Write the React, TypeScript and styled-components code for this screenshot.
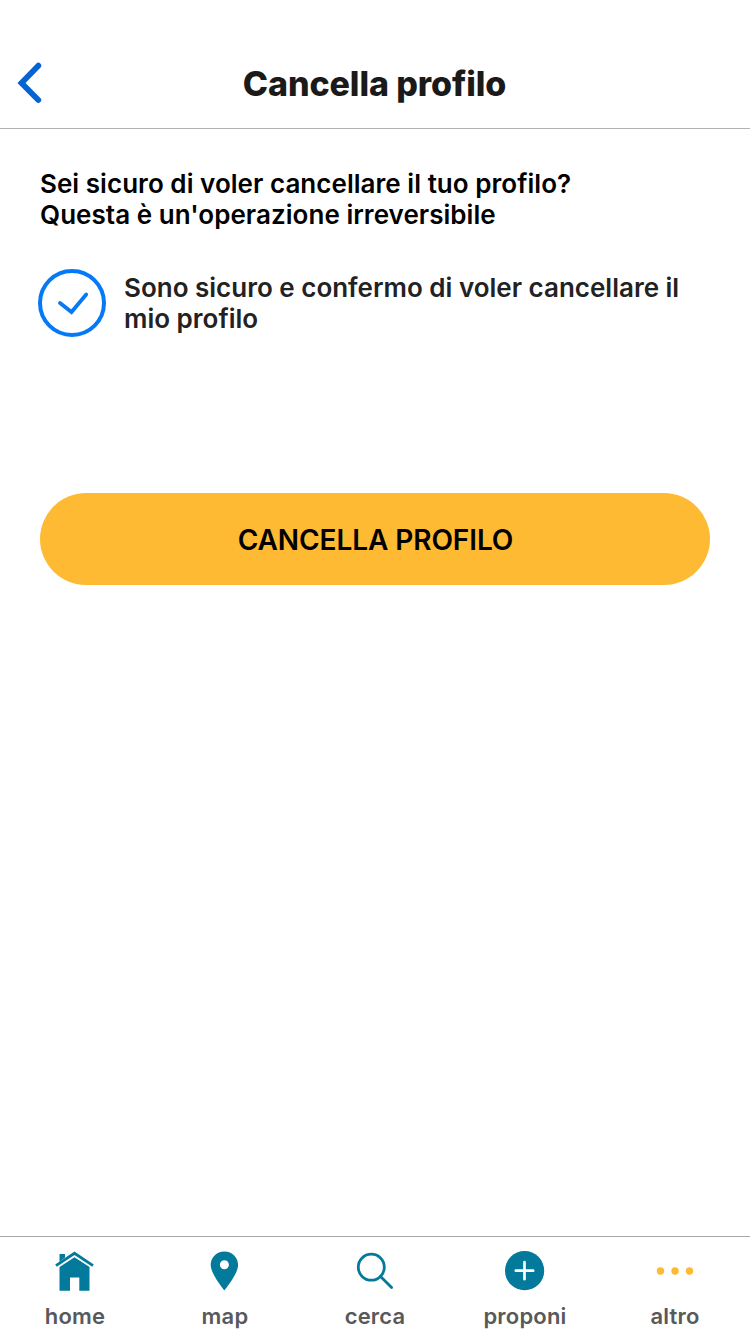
import React from 'react';
import styled, { createGlobalStyle } from 'styled-components';

const Global = createGlobalStyle`
  * { box-sizing: border-box; }
  body { margin: 0; background: #fff; font-family: Inter, "Liberation Sans", sans-serif; }
`;
const Screen = styled.div`
  height: 1334px;
  display: flex;
  flex-direction: column;
  overflow: hidden;
`;
const Header = styled.header`
  height: 129px;
  padding: 38px 17px 0;
  display: grid;
  grid-template-columns: 60px 1fr 60px;
  align-items: center;
  border-bottom: 1px solid #b2b2b2;
`;
const BackButton = styled.button`
  border: 0;
  padding: 0;
  background: none;
  display: flex;
`;
const Title = styled.h1`
  margin: 0;
  padding: 2px 1px 0 0;
  text-align: center;
  white-space: nowrap;
  font-size: 34px;
  line-height: 40px;
  font-weight: 800;
  color: #1a1a1a;
  letter-spacing: -0.1px;
`;
const Content = styled.main`
  flex: 1;
  padding: 39px 40px 0;
`;
const Paragraph = styled.p<{ $color?: string; $spacing?: number }>`
  margin: 0;
  font-size: 26px;
  line-height: 31px;
  font-weight: 600;
  letter-spacing: ${(p) => p.$spacing ?? 0}px;
  white-space: nowrap;
  color: ${(p) => p.$color ?? '#000'};
`;
const ConfirmRow = styled.label`
  margin: 38px 0 0 -2px;
  display: flex;
  align-items: center;
  gap: 18px;
`;
const ActionButton = styled.button`
  margin-top: 155px;
  padding: 1px 0 0 1px;
  width: 100%;
  height: 92px;
  border: 0;
  border-radius: 46px;
  background: #ffba33;
  font: 600 28px/34px Inter, sans-serif;
  letter-spacing: -0.08px;
  color: #000;
`;
const TabBar = styled.nav`
  height: 98px;
  border-top: 1px solid #a7a7a7;
  display: grid;
  grid-template-columns: repeat(5, 1fr);
`;
const Tab = styled.a`
  display: flex;
  flex-direction: column;
  align-items: center;
  padding-top: 12px;
  color: #58595a;
  font-size: 22px;
  line-height: 28px;
  font-weight: 600;
  letter-spacing: 0.2px;
`;
const TabIcon = styled.svg`
  width: 44px;
  height: 44px;
  margin-bottom: 9px;
  flex: none;
`;

const teal = '#037a9b';

export default function App() {
  return (
    <Screen>
      <Global />
      <Header>
        <BackButton aria-label="Indietro">
          <svg width="26" height="42" viewBox="0 0 26 42" fill="none" stroke="#0564d2" strokeWidth="5.800">
            <path d="M21.300 3.700 4.500 21 21.300 38" strokeLinecap="round" />
          </svg>
        </BackButton>
        <Title>Cancella profilo</Title>
      </Header>
      <Content>
        <Paragraph $spacing={0.04}>Sei sicuro di voler cancellare il tuo profilo?<br />Questa è un'operazione irreversibile</Paragraph>
        <ConfirmRow>
          <svg width="68" height="70" viewBox="0 0 68 70" fill="none" stroke="#067af6">
            <circle cx="34" cy="35" r="32" strokeWidth="4" />
            <path d="M22 35 33.500 44 48.200 26.500" strokeWidth="3.800" strokeLinecap="round" />
          </svg>
          <Paragraph $color="#222">Sono sicuro e confermo di voler cancellare il<br />mio profilo</Paragraph>
        </ConfirmRow>
        <ActionButton>CANCELLA PROFILO</ActionButton>
      </Content>
      <TabBar>
        <Tab>
          <TabIcon viewBox="0 0 44 44" fill={teal}>
            <path d="M6.500 5H12V8.500L6.500 13z" />
            <path d="M3 16.600 21.500 4.300 40 16.600" fill="none" stroke={teal} strokeWidth="2.800" />
            <path d="M6.500 18 21.500 8.200 36.500 18V41.700H26.300V28.500H17V41.700H6.500z" />
          </TabIcon>
          home
        </Tab>
        <Tab>
          <TabIcon viewBox="0 0 44 44" fill={teal}>
            <path fillRule="evenodd" d="M21.400 2.400C13.500 2.400 7.700 8.500 7.700 16C7.700 25 21.400 41.400 21.400 41.400S35.100 25 35.100 16C35.100 8.500 29.300 2.400 21.400 2.400M21.400 11.300a4.500 4.500 0 1 1 0 9a4.500 4.500 0 1 1 0-9" />
          </TabIcon>
          map
        </Tab>
        <Tab>
          <TabIcon viewBox="0 0 44 44" fill="none" stroke={teal} strokeWidth="2.800">
            <circle cx="18.300" cy="18.200" r="13" /><path d="M27.500 27.500 38.600 38.500" strokeLinecap="round" />
          </TabIcon>
          cerca
        </Tab>
        <Tab>
          <TabIcon viewBox="0 0 44 44">
            <circle cx="21.600" cy="21.700" r="19.600" fill={teal} />
            <path d="M21.500 13.200v17M12.800 21.700h17.400" stroke="#fff" strokeWidth="2.700" strokeLinecap="round" />
          </TabIcon>
          proponi
        </Tab>
        <Tab>
          <TabIcon viewBox="0 0 44 44" fill="#ffba33">
            <circle cx="7.500" cy="22" r="3.700" /><circle cx="22" cy="22" r="3.700" /><circle cx="36.500" cy="22" r="3.700" />
          </TabIcon>
          altro
        </Tab>
      </TabBar>
    </Screen>
  );
}
